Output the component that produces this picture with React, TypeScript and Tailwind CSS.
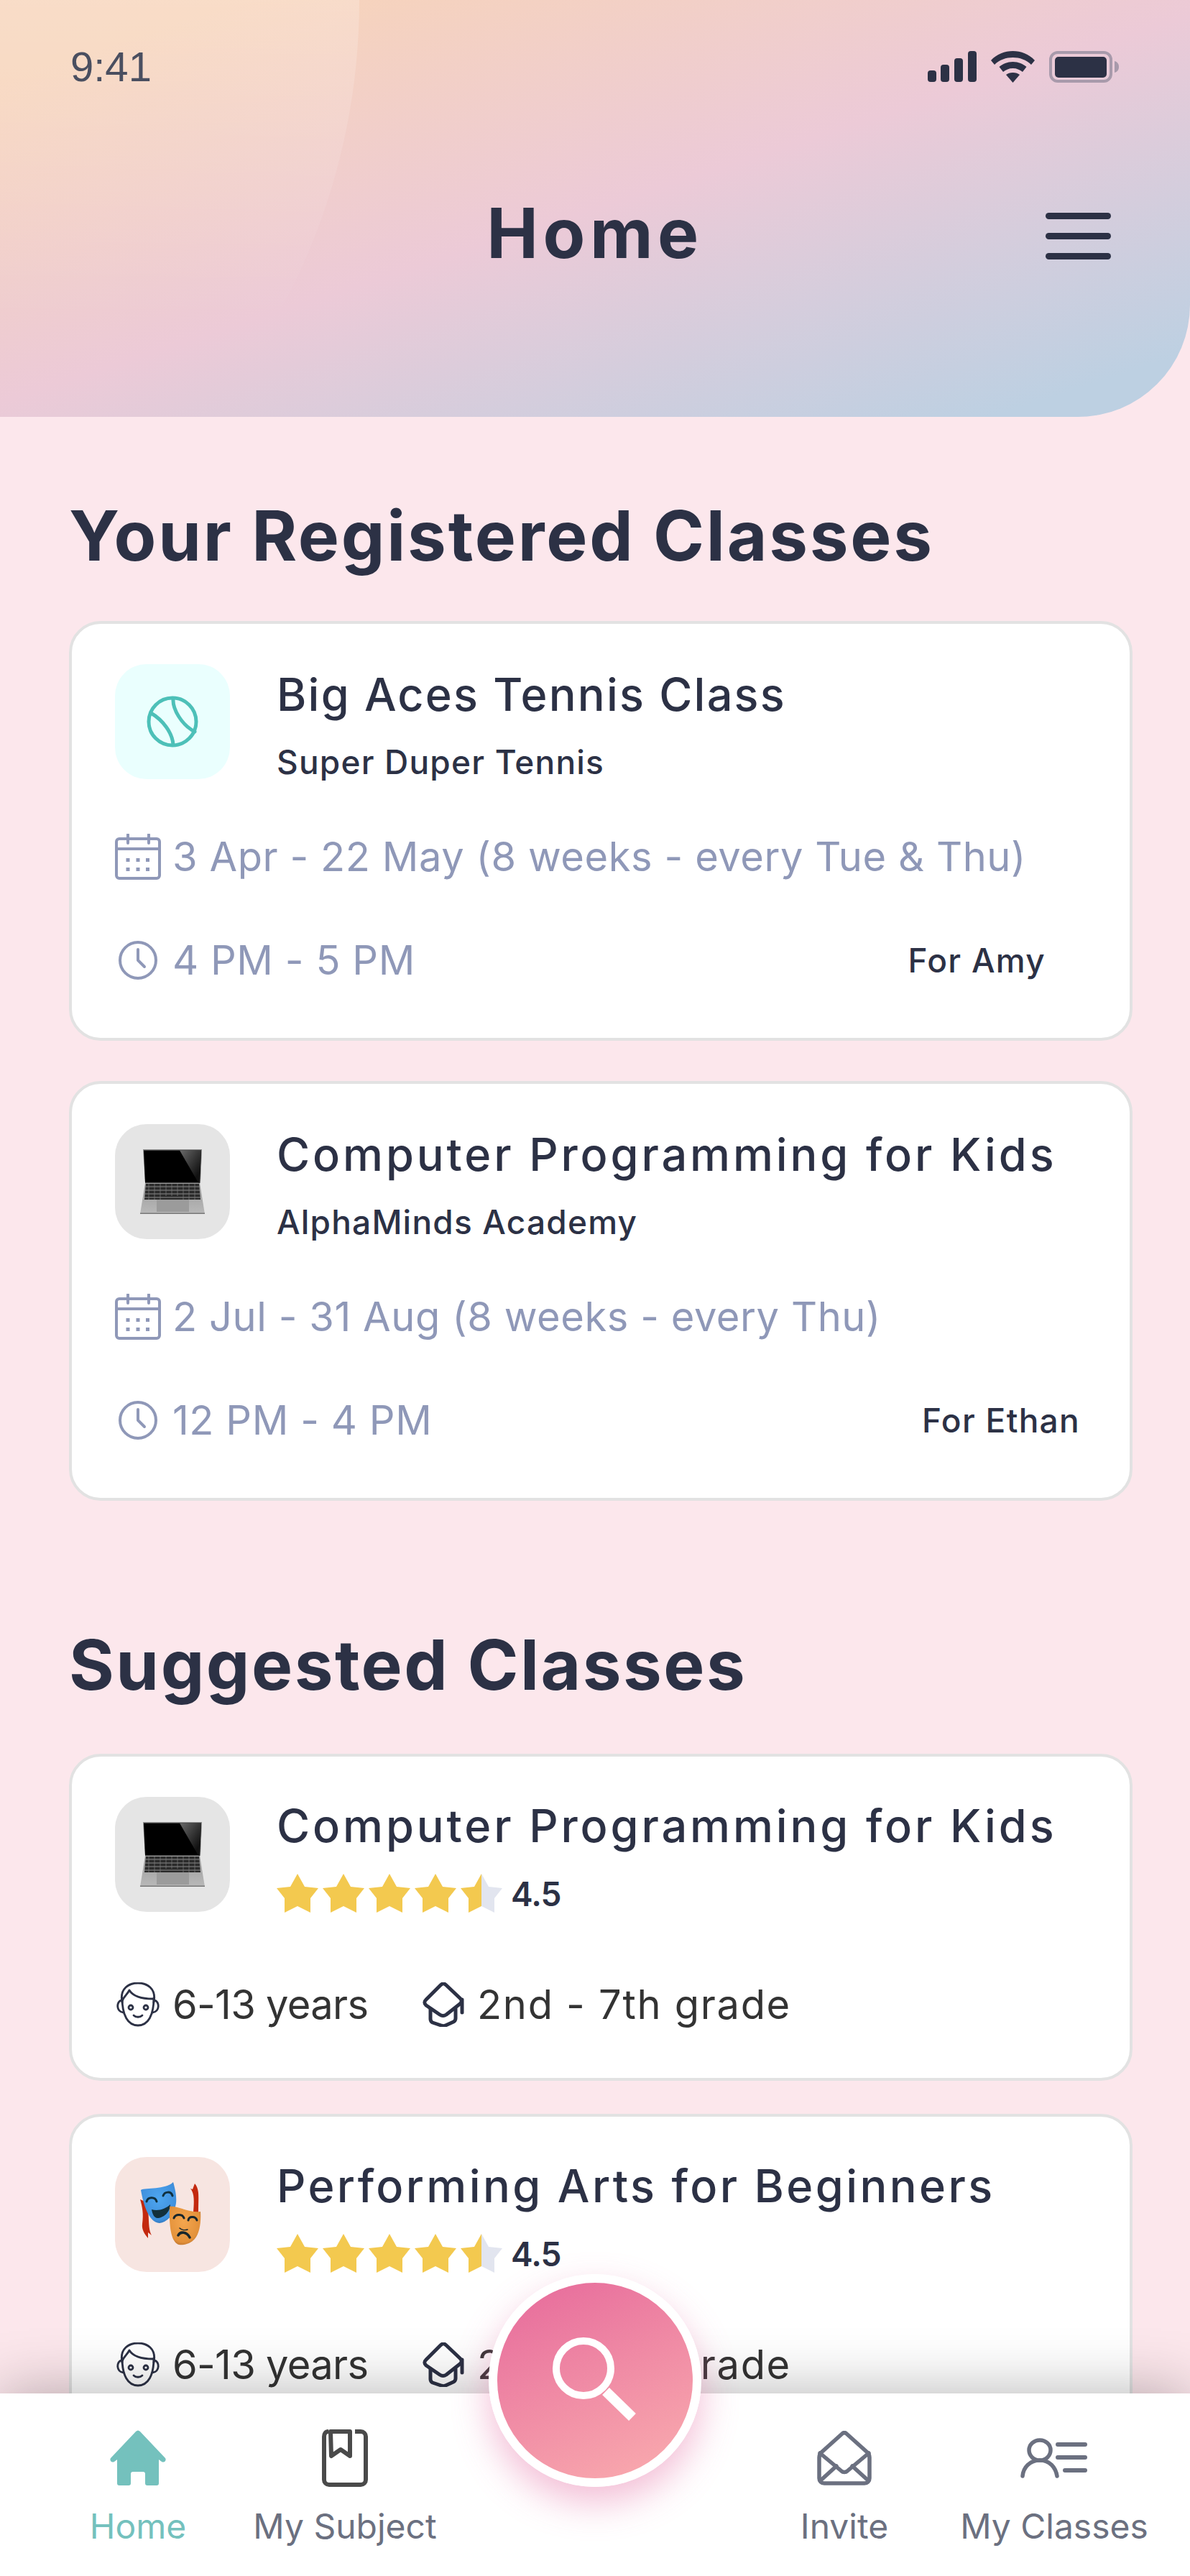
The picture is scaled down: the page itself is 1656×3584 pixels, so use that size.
import React from "react";

const Ball = () => (
  <svg width="72" height="72" viewBox="0 0 72 72" fill="none" stroke="#4dc0b8" strokeWidth="5" strokeLinecap="round">
    <circle cx="36" cy="36" r="33" />
    <path d="M37 4c-1 14 11 36 30 46" />
    <path d="M6 24c17 10 30 28 31 44" />
  </svg>
);

const Laptop = () => (
  <svg width="90" height="90" viewBox="0 0 90 90">
    <defs>
      <linearGradient id="glare" x1="0" y1="0" x2="1" y2="1">
        <stop offset="0" stopColor="#6a6a6a" />
        <stop offset="0.8" stopColor="#111" />
      </linearGradient>
      <linearGradient id="lapBase" x1="0" y1="0" x2="0" y2="1">
        <stop offset="0" stopColor="#9a9a9a" />
        <stop offset="1" stopColor="#b9b9b9" />
      </linearGradient>
    </defs>
    <path d="M4 0h82l-2 47H7z" fill="#8d8d8d" />
    <path d="M5 1.500h80l-2 45H7z" fill="#000" />
    <path d="M55 1.500h30l-2 45h-2z" fill="url(#glare)" />
    <path d="M7 47h76l7 43H0z" fill="url(#lapBase)" />
    <path d="M8 48h74l2 22H6z" fill="#2a2a2a" />
    <path d="M7 52h76M7 57h76M6.500 62h77M6 67h78" stroke="#8a8a8a" strokeWidth="1" />
    <path d="M12 48v22M20 48v22M28 48v22M36 48v17M44 48v17M52 48v17M60 48v22M68 48v22M76 48v22" stroke="#777" strokeWidth="0.800" />
    <rect x="23" y="70" width="45" height="17" fill="#9b9b9b" />
    <rect x="0" y="88.500" width="90" height="1.500" fill="#777" />
  </svg>
);

const Masks = () => (
  <svg width="90" height="90" viewBox="0 0 90 90" fill="none">
    <defs>
      <radialGradient id="blueM" cx="0.5" cy="0.4" r="0.7">
        <stop offset="0" stopColor="#4ea6f0" />
        <stop offset="0.75" stopColor="#3f8fdc" />
        <stop offset="1" stopColor="#1f5f9c" />
      </radialGradient>
      <radialGradient id="orangeM" cx="0.45" cy="0.4" r="0.7">
        <stop offset="0" stopColor="#f4a64e" />
        <stop offset="0.75" stopColor="#e3913a" />
        <stop offset="1" stopColor="#a8642a" />
      </radialGradient>
    </defs>
    <path d="M0 24c3 10 5 20 3 34-1 8 3 14 8 20l0-8 5 4c-6-12-2-24-7-46z" fill="#c3290f" />
    <path d="M76 2c7 8 5 18 5 40h-7c1-14 2-26-4-33l3 1z" fill="#c3290f" />
    <path d="M1 11C8 7 35 11 46 0c3 10 6 24 3 34-3 12-12 22-22 23C11 56 4 28 1 11z" fill="url(#blueM)" />
    <g stroke="#10303f" strokeWidth="3" strokeLinecap="round">
      <path d="M9 27c2-7 12-7 14 0" />
      <path d="M32 19c2-6 11-7 13 0" />
    </g>
    <path d="M16 38c9 3 20-1 26-7 0 11-10 19-18 19-4 0-7-5-8-12z" fill="#13303c" />
    <path d="M41 34C50 32 68 43 84 41c1 14-1 30-8 38-6 7-16 9-22 8-9-3-14-18-13-53z" fill="url(#orangeM)" />
    <g stroke="#17262c" strokeWidth="3" strokeLinecap="round">
      <path d="M47 50c2-6 12-6 14 0" />
      <path d="M67 53c1-6 10-6 12 0" />
      <path d="M53 74c3-6 12-5 16 3" strokeWidth="3.500" />
      <path d="M55 64c3 3 8 3 11 2" strokeWidth="1.500" />
    </g>
  </svg>
);

const Calendar = () => (
  <svg width="64" height="64" viewBox="0 0 64 64" fill="none" stroke="#8f98b8" strokeWidth="4" strokeLinecap="round">
    <rect x="2" y="7" width="60" height="55" rx="4" />
    <path d="M2 21h60M18 1v12M47 1v12" />
    <g fill="#8f98b8" stroke="none">
      <rect x="15.500" y="34" width="5" height="5" />
      <rect x="29.500" y="34" width="5" height="5" />
      <rect x="43" y="34" width="5" height="5" />
      <rect x="15.500" y="47" width="5" height="5" />
      <rect x="29.500" y="47" width="5" height="5" />
      <rect x="43" y="47" width="5" height="5" />
    </g>
  </svg>
);

const Clock = () => (
  <svg width="54" height="54" viewBox="0 0 54 54" fill="none" stroke="#8f98b8" strokeWidth="4" strokeLinecap="round" strokeLinejoin="round">
    <circle cx="27" cy="27" r="25" />
    <path d="M27 12v15l9 9" />
  </svg>
);

const Face = () => (
  <svg width="64" height="62" viewBox="0 0 64 62" fill="none" stroke="#2c3145" strokeWidth="2.800" strokeLinecap="round" strokeLinejoin="round">
    <path d="M10 28C6 8 20 1 32 1s26 7 22 27" />
    <path d="M10 22c0 24 8 38 22 38s22-14 22-38" />
    <path d="M10 26c2-6 7-9 10-15 6 10 20 12 33 12" />
    <path d="M9 25c-7 1-8 16 3 17M55 25c7 1 8 16-3 17" />
    <circle cx="22" cy="35" r="3" />
    <circle cx="43" cy="35" r="3" />
    <path d="M26 46c3 3 9 3 12 0" />
  </svg>
);

const Grad = () => (
  <svg width="58" height="62" viewBox="0 0 58 62" fill="none" stroke="#2c3145" strokeWidth="5" strokeLinecap="round" strokeLinejoin="round">
    <path d="M25 4 5 24c-3 3-3 5 0 8l19 13c3 2 6 2 9 0l19-15c3-3 3-5 0-8L33 4c-3-3-5-3-8 0z" />
    <path d="M11 37v14c0 2 1 4 3 5l12 4c2 1 4 1 6 0l11-5c2-1 3-3 3-5V37" />
    <path d="M55 24v18" />
  </svg>
);

const HomeIcon = () => (
  <svg width="78" height="78" viewBox="0 0 78 78">
    <path fill="#74c1bd" d="M36 2c2-2 4-2 6 0l35 37c2 3-1 7-5 5l-4-3v33c0 2-1 3-3 3H52c-2 0-3-1-3-3V61c0-2-1-3-3-3H32c-2 0-3 1-3 3v13c0 2-1 3-3 3H13c-2 0-3-1-3-3V41l-4 3c-4 2-7-2-5-5z" />
  </svg>
);

const BookIcon = () => (
  <svg width="64" height="80" viewBox="0 0 64 80" fill="none" stroke="#4a4a4a" strokeWidth="6">
    <path d="M9 3C5 3 3 6 3 10v60c0 4 3 7 7 7h44c4 0 7-3 7-7V10c0-4-3-7-7-7h-8" />
    <path d="M12 3h27v34l-13-9-13 9z" strokeLinejoin="round" />
  </svg>
);

const EnvelopeIcon = () => (
  <svg width="76" height="76" viewBox="0 0 76 76" fill="none" stroke="#6b7080" strokeWidth="5.500" strokeLinecap="round" strokeLinejoin="round">
    <path d="M35 4 6 30c-2 2-3 4-3 7v29c0 4 3 7 7 7h56c4 0 7-3 7-7V37c0-3-1-5-3-7L41 4c-2-2-4-2-6 0z" />
    <path d="M4 31l30 25c2 2 6 2 8 0l30-25" />
    <path d="M5 69l22-20M71 69 49 49" />
  </svg>
);

const UserListIcon = () => (
  <svg width="94" height="56" viewBox="0 0 94 56" fill="none" stroke="#6b7080" strokeLinecap="round">
    <ellipse cx="27" cy="17" rx="15" ry="14" strokeWidth="5.500" />
    <path d="M3 53c1-12 10-22 24-22s22 10 24 22" strokeWidth="5.500" />
    <path d="M52 9h38" strokeWidth="6" />
    <path d="M52 27h38" strokeWidth="6" />
    <path d="M62 45h28" strokeWidth="6" />
  </svg>
);

const StarFull = () => (
  <svg width="58" height="54" viewBox="0 0 58 54">
    <polygon fill="#f3c94f" points="29,0 39,18 58,20 47,34 47,54 29,45 11,54 11,34 0,20 19,18" />
  </svg>
);

const StarHalf = () => (
  <svg width="58" height="54" viewBox="0 0 58 54">
    <polygon fill="#e2e5ef" points="29,0 39,18 58,20 47,34 47,54 29,45" />
    <polygon fill="#f3c94f" points="29,0 29,45 11,54 11,34 0,20 19,18" />
  </svg>
);

const Stars = () => (
  <div className="flex items-center gap-[6px]">
    <StarFull />
    <StarFull />
    <StarFull />
    <StarFull />
    <StarHalf />
    <span className="ml-[6px] mt-[2px] text-[46px] leading-[54px] font-semibold text-[#2c3145] tracking-[-0.02em]">4.5</span>
  </div>
);

const CardTitle = ({ spacing, children }: { spacing: string; children: React.ReactNode }) => (
  <div className={`text-[63px] leading-[70px] font-medium text-[#2c3145] whitespace-nowrap ${spacing}`}>{children}</div>
);

const IconBox = ({ bg, children }: { bg: string; children: React.ReactNode }) => (
  <div className={`${bg} w-[160px] h-[160px] rounded-[44px] flex items-center justify-center shrink-0`}>{children}</div>
);

const Registered = ({
  icon,
  bg,
  title,
  spacing,
  org,
  date,
  time,
  who,
  whoClass,
}: {
  icon: React.ReactNode;
  bg: string;
  title: string;
  spacing: string;
  org: string;
  date: string;
  time: string;
  who: string;
  whoClass: string;
}) => (
  <div className="box-border h-[584px] bg-white border-[4px] border-[#e2e2e2] rounded-[44px] pl-[60px] pt-[56px]">
    <div className="flex">
      <IconBox bg={bg}>{icon}</IconBox>
      <div className="ml-[65px] mt-[7px]">
        <CardTitle spacing={spacing}>{title}</CardTitle>
        <div className="mt-[29px] text-[46px] leading-[60px] font-medium text-[#2c3145] tracking-[1.2px]">{org}</div>
      </div>
    </div>
    <div className="mt-[70px] flex items-center h-[64px]">
      <Calendar />
      <span className="ml-[16px] text-[56px] text-[#8f98b8] tracking-[0.01em] whitespace-nowrap">{date}</span>
    </div>
    <div className="mt-[80px] flex items-center h-[64px]">
      <div className="w-[64px] flex justify-center">
        <Clock />
      </div>
      <span className="ml-[16px] text-[56px] text-[#8f98b8] tracking-[0.01em] whitespace-nowrap">{time}</span>
      <span className={`ml-auto text-[46px] font-medium text-[#2c3145] tracking-[1.3px] whitespace-nowrap ${whoClass}`}>{who}</span>
    </div>
  </div>
);

const Suggested = ({
  icon,
  bg,
  title,
  spacing,
  grade,
}: {
  icon: React.ReactNode;
  bg: string;
  title: string;
  spacing: string;
  grade: string;
}) => (
  <div className="box-border h-[455px] bg-white border-[4px] border-[#e2e2e2] rounded-[44px] pl-[60px] pt-[56px]">
    <div className="flex">
      <IconBox bg={bg}>{icon}</IconBox>
      <div className="ml-[65px] mt-[5px]">
        <CardTitle spacing={spacing}>{title}</CardTitle>
        <div className="mt-[31px]">
          <Stars />
        </div>
      </div>
    </div>
    <div className="mt-[95px] flex items-center h-[64px] text-[56px] text-[#333333] whitespace-nowrap">
      <Face />
      <span className="ml-[16px] w-[348px] tracking-[-0.7px]">6-13 years</span>
      <Grad />
      <span className="ml-[18px] tracking-[1.7px]">{grade}</span>
    </div>
  </div>
);

const NavItem = ({ icon, label, active }: { icon: React.ReactNode; label: string; active?: boolean }) => (
  <div className="flex flex-col items-center">
    <div className="h-[80px] flex items-center justify-center">{icon}</div>
    <span className={`mt-[25px] text-[48px] leading-[60px] whitespace-nowrap ${active ? "text-[#74c1bd]" : "text-[#6b7080]"}`}>{label}</span>
  </div>
);

export default function App() {
  return (
    <div className="relative h-[3584px] w-[1656px] overflow-hidden bg-[#fce7ec] font-[Inter,sans-serif]">
      <header className="relative box-border h-[580px] overflow-hidden rounded-br-[156px] bg-[linear-gradient(162deg,#f7d4ba_10%,#eccad7_50%,#bdd0e2_92%)]">
        <div className="absolute -left-[1308px] -top-[904px] h-[1808px] w-[1808px] rounded-full bg-[linear-gradient(to_bottom,rgba(255,255,255,0.2)_50%,rgba(255,255,255,0)_75%)]" />
        <div className="relative flex items-center justify-between pl-[98px] pr-[98px] pt-[58px] h-[70px] box-content">
          <span className="font-['Liberation_Sans',sans-serif] text-[58px] leading-[70px] text-[#4a4f60]">9:41</span>
          <div className="flex items-center">
            <svg width="68" height="44" viewBox="0 0 68 44" fill="#2c3145">
              <rect x="0" y="27" width="12" height="16" rx="4" />
              <rect x="18" y="19" width="12" height="24" rx="4" />
              <rect x="37" y="10" width="12" height="33" rx="4" />
              <rect x="56" y="0" width="12" height="43" rx="4" />
            </svg>
            <svg className="ml-[20px]" width="61" height="44" viewBox="0 0 61 44" fill="#2c3145">
              <path d="M30.500 0C19 0 8.500 4 0 13l5 6c7-7 16-10 25.500-10S49 12 56 19l5-6C52.500 4 42 0 30.500 0z" />
              <path d="M30.500 15c-8 0-14 3-19 7l5.500 7c4-3 8-5 13.500-5s9.500 2 13.500 5l5.500-7c-5-4-11-7-19-7z" />
              <path d="M30.500 30c-4 0-7 1-9.500 3l9.500 11 9.500-11c-2.500-2-5.500-3-9.500-3z" />
            </svg>
            <svg className="ml-[20px]" width="98" height="44" viewBox="0 0 98 44" fill="none">
              <rect x="2" y="2" width="84" height="40" rx="10" stroke="#a89aab" strokeWidth="4" />
              <rect x="8" y="8" width="72" height="29" rx="5" fill="#2c3145" />
              <path d="M91 14c4 1 6 4 6 8s-2 7-6 8z" fill="#a89aab" />
            </svg>
          </div>
        </div>
        <div className="relative mt-[150px] flex items-center justify-center h-[92px]">
          <h1 className="text-[96px] leading-[92px] font-bold text-[#2c3145] tracking-[6.5px]">Home</h1>
          <div className="absolute left-[1455px] top-[18px] flex flex-col gap-[19px]">
            <div className="h-[9px] w-[91px] rounded-full bg-[#2c3145]" />
            <div className="h-[9px] w-[91px] rounded-full bg-[#2c3145]" />
            <div className="h-[9px] w-[91px] rounded-full bg-[#2c3145]" />
          </div>
        </div>
      </header>

      <main className="px-[96px] w-[1480px] box-content">
        <h2 className="mt-[115px] h-[100px] text-[96px] leading-[100px] font-bold text-[#2c3145] whitespace-nowrap tracking-[2.8px]">Your Registered Classes</h2>
        <div className="mt-[69px]">
          <Registered
            icon={<Ball />}
            bg="bg-[#eafffe]"
            title="Big Aces Tennis Class"
            spacing="tracking-[2.2px]"
            org="Super Duper Tennis"
            date="3 Apr - 22 May (8 weeks - every Tue & Thu)"
            time="4 PM - 5 PM"
            who="For Amy"
            whoClass="mr-[117px]"
          />
        </div>
        <div className="mt-[56px]">
          <Registered
            icon={<Laptop />}
            bg="bg-[#e5e5e5]"
            title="Computer Programming for Kids"
            spacing="tracking-[3.9px]"
            org="AlphaMinds Academy"
            date="2 Jul - 31 Aug (8 weeks - every Thu)"
            time="12 PM - 4 PM"
            who="For Ethan"
            whoClass="mr-[69px]"
          />
        </div>
        <h2 className="mt-[178px] h-[100px] text-[96px] leading-[100px] font-bold text-[#2c3145] whitespace-nowrap tracking-[2.5px]">Suggested Classes</h2>
        <div className="mt-[74px]">
          <Suggested icon={<Laptop />} bg="bg-[#e5e5e5]" title="Computer Programming for Kids" spacing="tracking-[3.9px]" grade="2nd - 7th grade" />
        </div>
        <div className="mt-[46px]">
          <Suggested icon={<Masks />} bg="bg-[#f7e5e1]" title="Performing Arts for Beginners" spacing="tracking-[3.4px]" grade="2nd - 7th grade" />
        </div>
      </main>

      <nav className="absolute bottom-0 left-0 right-0 box-border h-[254px] bg-white pt-[50px] grid grid-cols-[384px_192px_496px_206px_378px] shadow-[0_0_80px_rgba(0,0,0,0.3)]">
        <NavItem icon={<HomeIcon />} label="Home" active />
        <NavItem icon={<BookIcon />} label="My Subject" />
        <div />
        <NavItem icon={<EnvelopeIcon />} label="Invite" />
        <NavItem icon={<UserListIcon />} label="My Classes" />
      </nav>

      <div className="absolute left-[680px] top-[3164px] box-border flex h-[296px] w-[296px] items-center justify-center rounded-full border-[12px] border-white bg-[linear-gradient(155deg,#e8709d_10%,#f9aaae_95%)] shadow-[0_22px_50px_rgba(228,110,165,0.45)]">
        <svg width="130" height="150" viewBox="0 0 130 150" fill="none" stroke="#fff">
          <circle cx="49" cy="58" r="38" strokeWidth="10" />
          <path d="M80 90l37 36" strokeWidth="14" />
        </svg>
      </div>
    </div>
  );
}
